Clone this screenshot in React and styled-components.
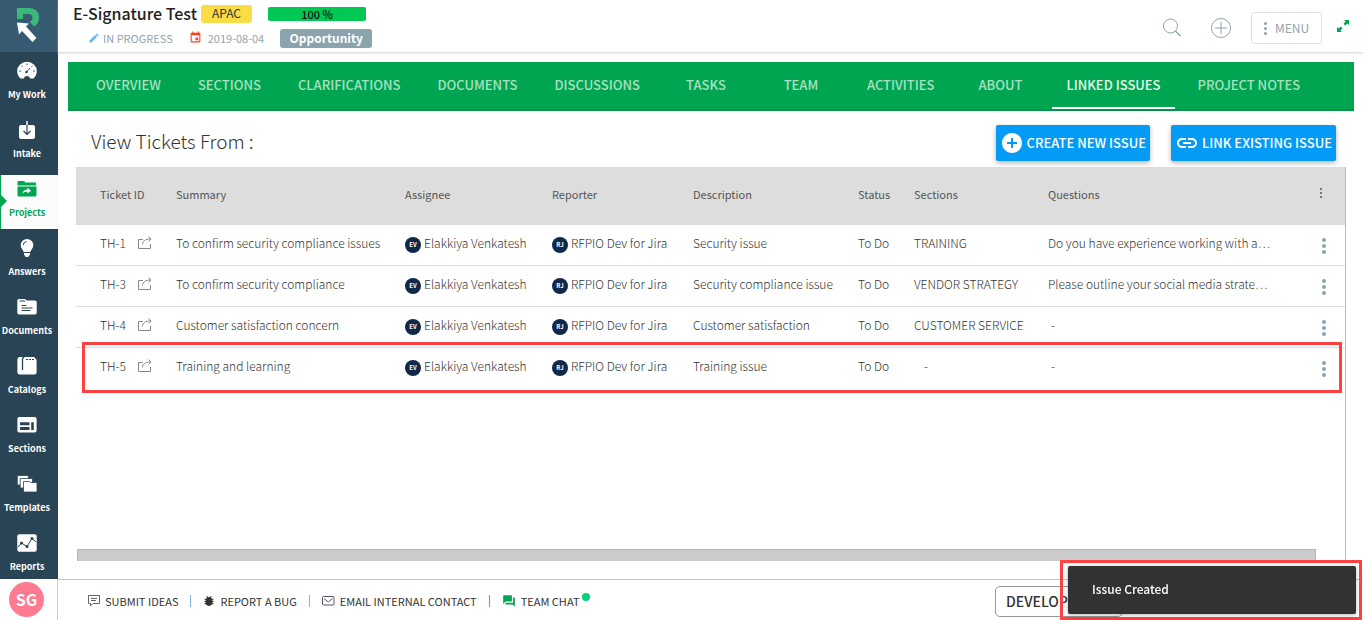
import React from "react";
import styled, { createGlobalStyle } from "styled-components";
import { MdModeEdit, MdEvent, MdLink, MdAddCircle, MdForum } from "react-icons/md";
import { IoMdBug } from "react-icons/io";

const tabs = [
  "OVERVIEW", "SECTIONS", "CLARIFICATIONS", "DOCUMENTS", "DISCUSSIONS", "TASKS",
  "TEAM", "ACTIVITIES", "ABOUT", "LINKED ISSUES", "PROJECT NOTES",
];

const tickets = [
  { id: "TH-1", summary: "To confirm security compliance issues", description: "Security issue", section: "TRAINING", question: "Do you have experience working with a…" },
  { id: "TH-3", summary: "To confirm security compliance", description: "Security compliance issue", section: "VENDOR STRATEGY", question: "Please outline your social media strate…" },
  { id: "TH-4", summary: "Customer satisfaction concern", description: "Customer satisfaction", section: "CUSTOMER SERVICE", question: "" },
  { id: "TH-5", summary: "Training and learning", description: "Training issue", section: "", question: "", isNew: true },
];

const GaugeIcon = () => (
  <svg width="20" height="20" viewBox="0 0 20 20">
    <path fill="#fff" d="M3.6 17.5A9.8 9.8 0 0 1 .2 10a9.8 9.3 0 0 1 19.6 0c0 3-1.3 5.8-3.4 7.5h-3.2a3.3 3.3 0 0 0-6.4 0z" />
    <path stroke="#294455" fill="none" d="M10 2.500v1.500M4.500 4.600l1 1.100M2.300 10h1.700M17.700 10h-1.700M15.500 4.600l-1 1.100M9.500 11L13 7" />
    <circle cx="9.500" cy="11" r="1.300" fill="#294455" />
  </svg>
);
const IntakeIcon = () => (
  <svg width="20" height="20" viewBox="0 0 20 20">
    <rect x="2" y="5" width="16" height="14" rx="2" fill="#fff" />
    <path d="M10 1v5" stroke="#fff" strokeWidth="1.500" />
    <path d="M10 5v9M6.500 11l3.500 3.500 3.500-3.500" stroke="#294455" strokeWidth="1.200" fill="none" />
  </svg>
);
const ProjectsIcon = () => (
  <svg width="20" height="20" viewBox="0 0 20 20">
    <path fill="#00a551" d="M1 2h6l1.500 1.500H19v3H.5V3zM.5 7.500h19V16a1.500 1.500 0 0 1-1.500 1.500H2A1.500 1.500 0 0 1 .5 16z" />
    <path fill="#fff" d="M5.500 14.500c.5-3 2.500-4 5-4V8.700l3.500 3-3.500 2.800v-1.800c-2 0-3.500.3-5 1.800z" />
  </svg>
);
const BulbIcon = () => (
  <svg width="20" height="20" viewBox="0 0 20 20">
    <path fill="#fff" d="M10 1a6.300 6.300 0 0 1 6.300 6.300c0 2.800-2.300 4.200-3 6.700H6.700c-.7-2.500-3-3.900-3-6.700A6.300 6.300 0 0 1 10 1zM7 15h6v2l-1 .5c0 1-.9 1.500-2 1.500s-2-.5-2-1.500L7 17z" />
    <path d="M6.300 7A3.700 3.700 0 0 1 9.500 3.500" fill="none" stroke="#294455" />
  </svg>
);
const FolderIcon = () => (
  <svg width="20" height="20" viewBox="0 0 20 20">
    <path fill="#fff" d="M2 2h6l1.700 1.500H18a1.700 1.700 0 0 1 1.700 1.700v10.500A1.700 1.700 0 0 1 18 17.500H2A1.700 1.700 0 0 1 .3 15.800V3.700A1.700 1.700 0 0 1 2 2z" />
    <path stroke="#294455" d="M2.500 4h5.500M4.500 8.500h5M4.500 11h11M4.500 13.500h9" />
  </svg>
);
const CatalogIcon = () => (
  <svg width="20" height="20" viewBox="0 0 20 20">
    <rect x=".4" y="1" width="19.200" height="17.500" rx="2.500" fill="#fff" />
    <path stroke="#294455" strokeDasharray="2 1" d="M9 3.500h8" />
    <path stroke="#294455" strokeWidth="1.300" fill="none" d="M7 1L5.500 2.500V14M18 1l1.700 2.500" />
  </svg>
);
const SectionsIcon = () => (
  <svg width="20" height="20" viewBox="0 0 20 20">
    <rect x=".4" y="2" width="19.200" height="15.500" rx="2" fill="#fff" />
    <path fill="#294455" d="M3 7.300h9.500v3H3zM3 12h9.500v3H3zM14.200 7.300h2.600V15h-2.600z" />
  </svg>
);
const StackIcon = () => (
  <svg width="20" height="20" viewBox="0 0 20 20" fill="#fff" stroke="#294455" strokeWidth=".8">
    <path d="M.3 1.500h10l1 1v8.500H.3z" />
    <path d="M3.200 4.500h12.300v9.500H3.200z" />
    <path d="M6.500 7.500h6l1 1H20v9.500H6.500z" />
  </svg>
);
const ReportIcon = () => (
  <svg width="20" height="20" viewBox="0 0 20 20">
    <rect x=".3" y="1.300" width="19.400" height="17.400" rx="2" fill="#fff" />
    <path d="M1 14l3.500-4 5.500 3.500 5-8 4 3.500" fill="none" stroke="#294455" />
    <g fill="#294455"><circle cx="4.500" cy="10" r="1.500" /><circle cx="10" cy="13.500" r="1.500" /><circle cx="15" cy="5.500" r="1.500" /></g>
  </svg>
);
const ShareIcon = () => (
  <svg width="14" height="14" viewBox="0 0 14 14" fill="none" stroke="#888">
    <path d="M5 3.500H.5v9h12V8M4.500 8.500c0-3.500 3-5.500 8-5.500M10.500.5L13 3l-2.500 2.500" />
  </svg>
);

const navItems = [
  ["My Work", <GaugeIcon />],
  ["Intake", <IntakeIcon />],
  ["Projects", <ProjectsIcon />],
  ["Answers", <BulbIcon />],
  ["Documents", <FolderIcon />],
  ["Catalogs", <CatalogIcon />],
  ["Sections", <SectionsIcon />],
  ["Templates", <StackIcon />],
  ["Reports", <ReportIcon />],
];

export default function App() {
  return (
    <Page>
      <GlobalStyle />
      <Sidebar>
        <Logo href="#" aria-label="Home">
          <svg width="24" height="36" viewBox="0 0 24 36">
            <path fill="#3cb878" d="M1 0h12c6 0 10 3.500 10 9.500 0 4.500-2 7.500-5 9l-4.500-5c2-.5 3-1.500 3-3.700C16.500 7.500 15 6 12.500 6H7v5H1z" />
            <path fill="#fff" d="M1 14.500l12 1-3 3L20.500 30l-4 4L6 23l-3 3.500z" />
          </svg>
        </Logo>
        <Nav>
          {navItems.map(([label, icon]) => (
            <NavItem key={label} href="#" $active={label === "Projects"}>
              <NavIcon>{icon}</NavIcon>
              {label}
            </NavItem>
          ))}
        </Nav>
        <UserBox>
          <Avatar>SG</Avatar>
        </UserBox>
      </Sidebar>
      <Main>
        <Header>
          <div>
            <TitleRow>
              <Title>E-Signature Test</Title>
              <Region>APAC</Region>
              <Progress>100 %</Progress>
            </TitleRow>
            <MetaRow>
              <Meta><MdModeEdit size={12} color="#64b5f6" />IN PROGRESS</Meta>
              <Meta $gap="6px"><MdEvent size={13} color="#ff3d1f" />2019-08-04</Meta>
              <Stage>Opportunity</Stage>
            </MetaRow>
          </div>
          <Actions>
            <Tools>
              <IconButton aria-label="Search">
                <svg width="20" height="20" viewBox="0 0 20 20" fill="none" stroke="#90a4ae"><circle cx="8.500" cy="8" r="7" /><path strokeWidth="1.500" d="M13.500 13l5 5" /></svg>
              </IconButton>
              <IconButton aria-label="Add">
                <svg width="22" height="22" viewBox="0 0 22 22" fill="none" stroke="#90a4ae"><circle cx="11" cy="11" r="9.500" /><path d="M11 5v12M5 11h12" /></svg>
              </IconButton>
            </Tools>
            <MenuButton><Dots $size="3px" $gap="2px"><i /><i /><i /></Dots>MENU</MenuButton>
            <IconButton aria-label="Expand">
              <svg width="14" height="18" viewBox="0 0 14 18"><path fill="#00a551" d="M8 1h5v5l-1.600-1.600-2.200 2.200-1.800-1.800 2.200-2.200zM1 8l1.600 1.600 2.200-2.200 1.800 1.800-2.200 2.200L6 13H1z" /></svg>
            </IconButton>
          </Actions>
        </Header>
        <Tabs>
          {tabs.map((tab) => (
            <Tab key={tab} href="#" $active={tab === "LINKED ISSUES"}>{tab}</Tab>
          ))}
        </Tabs>
        <Content>
          <Toolbar>
            <Heading>View Tickets From :</Heading>
            <BlueButton><MdAddCircle size={24} />CREATE NEW ISSUE</BlueButton>
            <BlueButton><MdLink size={24} />LINK EXISTING ISSUE</BlueButton>
          </Toolbar>
          <TableBox>
            <Table>
              <colgroup>
                <Col $w="100px" /><Col $w="229px" /><Col $w="147px" /><Col $w="141px" /><Col $w="165px" />
                <Col $w="56px" /><Col $w="134px" /><Col /><Col $w="42px" />
              </colgroup>
              <thead>
                <tr>
                  <Th>Ticket ID</Th><Th>Summary</Th><Th>Assignee</Th><Th>Reporter</Th><Th>Description</Th>
                  <Th>Status</Th><Th>Sections</Th><Th>Questions</Th>
                  <Th><DotsButton $head aria-label="Columns"><Dots $size="2px" $gap="2px" $color="#555"><i /><i /><i /></Dots></DotsButton></Th>
                </tr>
              </thead>
              <tbody>
                {tickets.map((t) => (
                  <Row key={t.id} $marked={t.isNew}>
                    <Td><Cell $gap="12px">{t.id}<ShareIcon /></Cell></Td>
                    <Td>{t.summary}</Td>
                    <Td><Cell $gap="3px"><Initials>EV</Initials>Elakkiya Venkatesh</Cell></Td>
                    <Td><Cell $gap="3px"><Initials>RJ</Initials>RFPIO Dev for Jira</Cell></Td>
                    <Td>{t.description}</Td>
                    <Td>To Do</Td>
                    <Td>{t.section || <Empty $indent="10px">-</Empty>}</Td>
                    <Td>{t.question || <Empty $indent="3px">-</Empty>}</Td>
                    <Td><DotsButton aria-label={"Actions for " + t.id}><Dots $size="4px" $gap="2px"><i /><i /><i /></Dots></DotsButton></Td>
                  </Row>
                ))}
              </tbody>
            </Table>
            <ScrollBar />
          </TableBox>
        </Content>
        <Footer>
          <FooterLink href="#">
            <svg width="12" height="12" viewBox="0 0 12 12" fill="none" stroke="#666"><path d="M.5.500h11v8H5L2.500 11V8.500h-2zM3 3.500h6M3 5.500h5" /></svg>
            SUBMIT IDEAS
          </FooterLink>
          <Divider />
          <FooterLink href="#"><IoMdBug size={12} />REPORT A BUG</FooterLink>
          <Divider />
          <FooterLink href="#">
            <svg width="13" height="12" viewBox="0 0 13 12" fill="none" stroke="#556"><rect x=".5" y="1.500" width="11.500" height="8.500" rx="1" /><path d="M2 3.500l4.300 3.500L10.500 3.500" /></svg>
            EMAIL INTERNAL CONTACT
          </FooterLink>
          <Divider $green />
          <FooterLink href="#"><MdForum size={14} color="#00a551" />TEAM CHAT<Online /></FooterLink>
          <EnvButton>DEVELOPMENT</EnvButton>
        </Footer>
      </Main>
      <ToastFrame>
        <Toast role="status">Issue Created</Toast>
      </ToastFrame>
    </Page>
  );
}

const GlobalStyle = createGlobalStyle`
  * {
    box-sizing: border-box;
  }
  body {
    margin: 0;
    background: #fff;
    color: #333;
    font-family: "Noto Sans CJK SC", "Open Sans", sans-serif;
    font-size: 12px;
    line-height: 16px;
  }
  a {
    color: inherit;
    text-decoration: none;
  }
  button {
    font: inherit;
    color: inherit;
    padding: 0;
    border: 0;
    background: none;
  }
  svg {
    display: block;
    flex: none;
  }
`;

const Page = styled.div`
  display: flex;
  height: 100vh;
`;
const Sidebar = styled.aside`
  display: flex;
  flex-direction: column;
  width: 58px;
  flex: none;
`;
const Logo = styled.a`
  display: flex;
  justify-content: center;
  align-items: center;
  height: 52px;
  flex: none;
  padding-right: 2px;
  background: #365b72;
`;
const Nav = styled.nav`
  display: flex;
  flex-direction: column;
  gap: 5px;
  flex: 1;
  min-height: 0;
  overflow: hidden;
  padding-top: 5px;
  background: #294455;
`;
const NavItem = styled.a`
  position: relative;
  display: flex;
  flex-direction: column;
  align-items: center;
  gap: 6px;
  height: 54px;
  flex: none;
  padding: 4px 4px 0 0;
  font-size: 9px;
  font-weight: 700;
  color: ${(props) => (props.$active ? "#00a551" : "#fff")};
  background: ${(props) => (props.$active ? "#fcfcfc" : "none")};
  box-shadow: ${(props) => (props.$active ? "inset 1px 0 #00a551" : "none")};
  &::before {
    content: "";
    display: ${(props) => (props.$active ? "block" : "none")};
    position: absolute;
    left: 0;
    top: 19px;
    border: 7px solid transparent;
    border-left-color: #00a551;
    border-right: 0;
  }
`;
const NavIcon = styled.span`
  display: flex;
  align-items: center;
  height: 20px;
`;
const UserBox = styled.div`
  display: flex;
  align-items: center;
  height: 41px;
  flex: none;
  padding-left: 9px;
  border-right: 1px solid #ccc;
`;
const Avatar = styled.div`
  width: 35px;
  height: 35px;
  border-radius: 50%;
  background: #ff7b92;
  color: #fff;
  font-size: 16px;
  font-weight: 700;
  line-height: 35px;
  text-align: center;
`;

const Main = styled.main`
  display: flex;
  flex-direction: column;
  flex: 1;
  min-width: 0;
`;
const Header = styled.header`
  display: flex;
  justify-content: space-between;
  height: 53px;
  flex: none;
  padding: 4px 13px 0 15px;
  border-bottom: 1px solid #e0e0e0;
  box-shadow: 0 1px 1px #eee;
`;
const TitleRow = styled.div`
  display: flex;
  align-items: center;
  height: 20px;
`;
const Title = styled.h1`
  margin: 0 4px 0 0;
  padding-bottom: 3px;
  font-size: 16px;
  font-weight: 500;
  line-height: 20px;
  color: #222;
`;
const Region = styled.span`
  width: 51px;
  margin-right: 16px;
  padding-bottom: 2px;
  border-radius: 3px;
  background: #fadc45;
  line-height: 16px;
  text-align: center;
`;
const Progress = styled.div`
  width: 98px;
  border-radius: 2px;
  background: #00c853;
  color: #111;
  font-size: 11px;
  font-weight: 500;
  line-height: 14px;
  text-align: center;
`;
const MetaRow = styled.div`
  display: flex;
  align-items: center;
  gap: 16px;
  padding: 1px 0 0 15px;
  height: 28px;
`;
const Meta = styled.span`
  display: flex;
  align-items: center;
  gap: ${(props) => props.$gap || "3px"};
  padding-bottom: 2px;
  font-size: 11px;
  color: #90a4ae;
`;
const Stage = styled.span`
  width: 92px;
  padding-bottom: 2px;
  border-radius: 3px;
  background: #8ba3ad;
  color: #fff;
  font-weight: 700;
  line-height: 17px;
  text-align: center;
`;
const Actions = styled.div`
  display: flex;
  align-items: center;
  gap: 14px;
`;
const Tools = styled.div`
  display: flex;
  align-items: center;
  gap: 28px;
  margin-right: 5px;
`;
const IconButton = styled.button`
  display: flex;
`;
const MenuButton = styled.button`
  display: flex;
  align-items: center;
  justify-content: center;
  gap: 8px;
  width: 71px;
  height: 32px;
  border: 1px solid #e0e0e0;
  border-radius: 3px;
  color: #90a4ae;
`;
const Dots = styled.span`
  display: inline-flex;
  flex-direction: column;
  gap: ${(props) => props.$gap};
  i {
    width: ${(props) => props.$size};
    height: ${(props) => props.$size};
    border-radius: 50%;
    background: ${(props) => props.$color || "#8ba3ad"};
  }
`;
const DotsButton = styled.button`
  display: flex;
  justify-content: center;
  width: 100%;
  padding: ${(props) => (props.$head ? "0 6px 2px 0" : "6px 0 0")};
`;

const Tabs = styled.nav`
  display: flex;
  gap: 9px;
  height: 49px;
  flex: none;
  margin: 9px 9px 0 10px;
  padding-left: 14px;
  background: #00a551;
  border-bottom: 2px solid #00964a;
`;
const Tab = styled.a`
  min-width: 86px;
  padding: 0 14px;
  border-bottom: 2px solid ${(props) => (props.$active ? "#fff" : "transparent")};
  color: ${(props) => (props.$active ? "#e8f7ee" : "#a8e0c0")};
  font-size: 13px;
  font-weight: 500;
  line-height: 45px;
  text-align: center;
  white-space: nowrap;
`;

const Content = styled.section`
  display: flex;
  flex-direction: column;
  flex: 1;
  min-height: 0;
  padding: 14px 17px 18px 18px;
`;
const Toolbar = styled.div`
  display: flex;
  align-items: center;
  gap: 21px;
  padding: 0 10px 6px 15px;
`;
const Heading = styled.h2`
  flex: 1;
  margin: 0;
  padding-bottom: 4px;
  font-size: 19px;
  font-weight: 300;
  line-height: 24px;
`;
const BlueButton = styled.button`
  display: flex;
  align-items: center;
  gap: 3px;
  height: 36px;
  padding: 0 4px;
  border-radius: 2px;
  background: #039bf5;
  box-shadow: 0 2px 5px rgba(0, 0, 0, 0.3);
  color: #fff;
  font-size: 13px;
  font-weight: 500;
`;
const TableBox = styled.div`
  display: flex;
  flex-direction: column;
  justify-content: space-between;
  flex: 1;
  border-right: 1px solid #bbb;
`;
const Table = styled.table`
  width: 100%;
  table-layout: fixed;
  border-collapse: separate;
  border-spacing: 0;
`;
const Col = styled.col`
  width: ${(props) => props.$w || "auto"};
`;
const Th = styled.th`
  height: 58px;
  padding: 0 0 4px;
  background: #ddd;
  color: #555;
  font-size: 11px;
  font-weight: 400;
  text-align: left;
  &:first-child {
    padding-left: 24px;
  }
`;
const Td = styled.td`
  height: 41px;
  padding: 0 0 4px;
  border-bottom: 1px solid #ddd;
  white-space: nowrap;
  font-weight: 300;
  &:first-child {
    padding-left: 24px;
  }
`;
const Row = styled.tr`
  position: relative;
  &:last-child ${Td} {
    border-bottom-color: transparent;
  }
  ${Td}:first-child::after {
    content: "";
    display: ${(props) => (props.$marked ? "block" : "none")};
    position: absolute;
    inset: -6px 3px -4px 6px;
    border: 3px solid #ff4141;
    pointer-events: none;
  }
`;
const Cell = styled.div`
  display: flex;
  align-items: center;
  gap: ${(props) => props.$gap};
  height: 16px;
`;
const Initials = styled.span`
  width: 16px;
  height: 16px;
  margin-top: 3px;
  border-radius: 50%;
  background: #10294b;
  color: #fff;
  font-size: 6px;
  font-weight: 700;
  text-align: center;
`;
const Empty = styled.span`
  padding-left: ${(props) => props.$indent};
`;
const ScrollBar = styled.div`
  height: 12px;
  margin: 0 29px 0 1px;
  border: 1px solid #b5b5b5;
  border-bottom: 0;
  background: #cbcbcb;
`;

const Footer = styled.footer`
  display: flex;
  align-items: center;
  height: 41px;
  flex: none;
  padding: 2px 240px 0 30px;
  border-top: 1px solid #c4c4c4;
`;
const FooterLink = styled.a`
  position: relative;
  display: flex;
  align-items: center;
  gap: 5px;
  font-size: 11px;
`;
const Divider = styled.span`
  width: 1px;
  height: 12px;
  margin: 0 12px;
  background: ${(props) => (props.$green ? "#6aa583" : "#7fb8e0")};
`;
const Online = styled.span`
  position: absolute;
  right: -10px;
  top: 0;
  width: 8px;
  height: 8px;
  border-radius: 50%;
  background: #00d27a;
`;
const EnvButton = styled.button`
  height: 31px;
  width: 128px;
  margin-left: auto;
  padding-left: 10px;
  border: 1px solid #999;
  border-radius: 5px;
  font-size: 14px;
  font-weight: 500;
  text-align: left;
`;

const ToastFrame = styled.div`
  position: fixed;
  right: 1px;
  bottom: 0;
  padding: 3px 3px 3px 5px;
  border: 3px solid #ff4141;
`;
const Toast = styled.div`
  width: 288px;
  padding: 0 24px 2px;
  border-radius: 2px;
  background: #323232;
  box-shadow: 0 1px 4px rgba(0, 0, 0, 0.3);
  color: #fff;
  font-weight: 500;
  line-height: 46px;
`;
